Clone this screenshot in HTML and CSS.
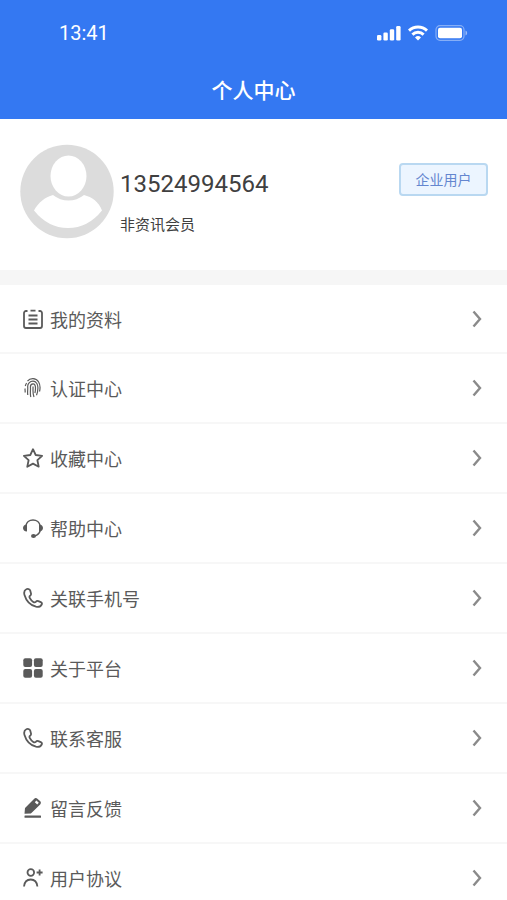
FILE: index.html
```html
<!DOCTYPE html>
<html lang="zh-CN">
  <head>
    <meta charset="UTF-8" />
    <meta name="viewport" content="width=device-width, initial-scale=1.0" />
    <title>个人中心</title>
    <link rel="stylesheet" href="styles.css">
  </head>
  <body>
    <header class="cabecera">
      <div class="estado">
        <span class="hora">13:41</span>
        <div class="indicadores">
          <svg width="24" height="16" viewBox="0 0 24 16" fill="#fff">
            <rect x="0" y="10" width="4.4" height="5.5" rx="1.3" />
            <rect x="6.4" y="7.5" width="4.4" height="8" rx="1.3" />
            <rect x="12.8" y="4.3" width="4.4" height="11.2" rx="1.3" />
            <rect x="19.2" y="1" width="4.4" height="14.5" rx="1.3" />
          </svg>
          <svg width="20" height="16" viewBox="0 0 20 16" fill="none" stroke="#fff" stroke-width="2.9">
            <path d="M1 5.6a13 13 0 0 1 18 0" />
            <path d="M4.400 9.600a8 8 0 0 1 11.200 0" />
            <path d="M10 15.500l-3-3.100a4.300 4.300 0 0 1 6 0z" fill="#fff" stroke="none" />
          </svg>
          <svg width="33" height="16" viewBox="0 0 33 16">
            <rect x="1" y="0.700" width="28" height="14.600" rx="4" fill="none" stroke="#fff" stroke-opacity="0.400" stroke-width="1.200" />
            <rect x="3" y="2.800" width="24" height="10.400" rx="2" fill="#fff" />
            <path d="M30.500 5.500c2.200 1 2.200 4 0 5z" fill="#fff" fill-opacity="0.500" />
          </svg>
        </div>
      </div>
      <h1>个人中心</h1>
    </header>
    <main>
      <section class="perfil">
        <svg class="avatar" viewBox="0 0 94 94">
          <circle cx="47" cy="47" r="46.700" fill="#dcdcdc" />
          <ellipse cx="48.500" cy="31.500" rx="18" ry="20.500" fill="#fff" />
          <path d="M33 50.500q7 5.500 15.500 5.500t15.500-5.500c8 2 15 7 18 15.500q-14 17.500-34 17.500T14 66c4-7.500 11-13.500 19-15.500z" fill="#fff" />
        </svg>
        <div class="datos">
          <p class="telefono">13524994564</p>
          <p class="nivel">非资讯会员</p>
        </div>
        <button type="button" class="tipo">企业用户</button>
      </section>
      <nav class="menu">
        <a href="#">
          <svg class="icono" viewBox="0 0 20 20">
            <path d="M4.500 2H3a2 2 0 0 0-2 2v13a2 2 0 0 0 2 2h14a2 2 0 0 0 2-2V4a2 2 0 0 0-2-2h-1.500M7.500 1.600h5M5.500 6.500h9M5.500 10.500h9M5.500 14.500h9" />
          </svg>
          <span>我的资料</span>
          <svg class="flecha" viewBox="0 0 10 18"><path d="M1.500 1.500L8 9l-6.500 7.500" /></svg>
        </a>
        <a href="#">
          <svg class="icono huella" viewBox="0 0 20 20">
            <path d="M4.500 3.200C7-.3 13-.3 15.500 3.700c1.700 2.800 1.900 6.300 1 9.800M2.300 8c.3-1.200.7-2.200 1.300-3M1.900 10.500c.4 1.500 0 2.500.4 4M4.800 17c-.6-3 .2-5.500-.1-8-.3-3.300 2.300-5.800 5.300-5.800 3.200 0 5 3.100 4.900 6.800 0 2.500-.5 5-1.400 7.200M7.800 19c-1-3.500 0-7-.4-10 0-2 1.200-3.100 2.600-3.100 1.700 0 2.500 1.600 2.500 4.100 0 2-.2 3.500-.6 5M10 8.500c.2 3.500-.6 6.500 1 10.500" />
          </svg>
          <span>认证中心</span>
          <svg class="flecha" viewBox="0 0 10 18"><path d="M1.500 1.500L8 9l-6.500 7.500" /></svg>
        </a>
        <a href="#">
          <svg class="icono" viewBox="0 0 20 20">
            <path d="M10 1.200l2.700 5.800 6.400.8-4.700 4.400 1.300 6.500L10 15.600l-5.700 3.100 1.300-6.500L.9 7.800l6.400-.8z" />
          </svg>
          <span>收藏中心</span>
          <svg class="flecha" viewBox="0 0 10 18"><path d="M1.500 1.500L8 9l-6.500 7.500" /></svg>
        </a>
        <a href="#">
          <svg class="icono" viewBox="0 0 20 20">
            <path d="M2.800 8a7.300 7.300 0 0 1 14.400 0M17.200 12.500c-.8 3-3 5-6 5.500" stroke-width="1.500" />
            <path d="M4 6.500v7C1.400 13.300 0 11.900 0 10s1.400-3.300 4-3.500zM16 6.500v7c2.600-.2 4-1.600 4-3.500s-1.400-3.300-4-3.500z" fill="currentColor" stroke="none" />
            <ellipse cx="10.500" cy="18" rx="2.500" ry="1.900" fill="currentColor" stroke="none" />
          </svg>
          <span>帮助中心</span>
          <svg class="flecha" viewBox="0 0 10 18"><path d="M1.500 1.500L8 9l-6.500 7.500" /></svg>
        </a>
        <a href="#">
          <svg class="icono" viewBox="0 0 20 20">
            <path d="M3.300 1.300C1.300 2.300.8 4.500 1.500 7c1.700 5.800 6 10.300 11.500 11.700 2.400.5 4.700-.2 5.700-2.200.5-1 .1-1.900-.9-2.400l-2.500-1c-1-.4-1.700-.2-2.300.5-.9 1-1.700 1-2.700.3-1.600-1.100-2.800-2.500-3.600-4.100-.5-1-.3-1.700.6-2.300.8-.6.9-1.200.7-2.100l-.8-3c-.4-1.300-2.600-1.800-3.900-1.100z" />
          </svg>
          <span>关联手机号</span>
          <svg class="flecha" viewBox="0 0 10 18"><path d="M1.500 1.500L8 9l-6.500 7.500" /></svg>
        </a>
        <a href="#">
          <svg class="icono relleno" viewBox="0 0 20 20">
            <rect x="0.300" y="0.300" width="8.800" height="8.800" rx="2" />
            <rect x="10.900" y="0.300" width="8.800" height="8.800" rx="2" />
            <rect x="0.300" y="10.900" width="8.800" height="8.800" rx="2" />
            <rect x="10.900" y="10.900" width="8.800" height="8.800" rx="2" />
          </svg>
          <span>关于平台</span>
          <svg class="flecha" viewBox="0 0 10 18"><path d="M1.500 1.500L8 9l-6.500 7.500" /></svg>
        </a>
        <a href="#">
          <svg class="icono" viewBox="0 0 20 20">
            <path d="M3.300 1.300C1.300 2.300.8 4.500 1.500 7c1.700 5.800 6 10.300 11.500 11.700 2.400.5 4.700-.2 5.700-2.200.5-1 .1-1.900-.9-2.400l-2.500-1c-1-.4-1.700-.2-2.300.5-.9 1-1.700 1-2.700.3-1.600-1.100-2.800-2.500-3.600-4.100-.5-1-.3-1.700.6-2.300.8-.6.9-1.200.7-2.100l-.8-3c-.4-1.300-2.600-1.800-3.900-1.100z" />
          </svg>
          <span>联系客服</span>
          <svg class="flecha" viewBox="0 0 10 18"><path d="M1.500 1.500L8 9l-6.500 7.500" /></svg>
        </a>
        <a href="#">
          <svg class="icono relleno" viewBox="0 0 20 20">
            <path fill-rule="evenodd" d="M1.500 15.800l.5-5.800L11 1q1.700-1.700 3.400-.2l2.600 2.300q1.700 1.600.2 3.400l-9.300 9zM11.800 4.300l2.400 2.200 1.600-1.700-2.400-2.200z" />
            <rect x="1.500" y="17.500" width="16.500" height="2.200" rx="0.500" />
          </svg>
          <span>留言反馈</span>
          <svg class="flecha" viewBox="0 0 10 18"><path d="M1.500 1.500L8 9l-6.500 7.500" /></svg>
        </a>
        <a href="#">
          <svg class="icono" viewBox="0 0 20 20">
            <circle cx="7.800" cy="4.500" r="3.300" />
            <path d="M1 18.500c.5-4.700 3-7 6.700-7s6.200 2.300 6.700 7M13.600 4.500h6M16.600 1.500v6" />
          </svg>
          <span>用户协议</span>
          <svg class="flecha" viewBox="0 0 10 18"><path d="M1.500 1.500L8 9l-6.500 7.500" /></svg>
        </a>
      </nav>
    </main>
  </body>
</html>
```
FILE: styles.css
```css
* {
  box-sizing: border-box;
}
body {
  margin: 0;
  background: #fff;
  color: #404040;
  font-family: Roboto, "Noto Sans CJK SC", sans-serif;
}
/* Cabecera azul: barra de estado y título */
.cabecera {
  background: #3478f2;
  color: #fff;
  padding-bottom: 12px;
}
.estado {
  display: flex;
  justify-content: space-between;
  align-items: center;
  height: 66px;
  padding: 0 39px 0 59px;
}
.hora {
  font-size: 20px;
  line-height: 24px;
}
.indicadores {
  display: flex;
  gap: 7px;
}
h1 {
  margin: 0;
  padding-top: 9px;
  font-size: 21px;
  font-weight: 500;
  line-height: 32px;
  text-align: center;
}
/* Datos del usuario; el borde inferior es la franja gris */
.perfil {
  display: flex;
  align-items: flex-start;
  gap: 6px;
  padding: 25px 19px 31px 20px;
  border-bottom: 15px solid #f6f6f6;
}
.avatar {
  width: 94px;
  height: 95px;
}
.datos {
  flex: 1;
  padding-top: 24px;
}
.datos p {
  margin: 0;
}
.telefono {
  font-size: 24px;
  line-height: 32px;
}
.nivel {
  padding-top: 13px;
  font-size: 15px;
  line-height: 24px;
}
.tipo {
  width: 89px;
  height: 33px;
  margin-top: 19px;
  padding: 0 0 2px;
  border: 2px solid #b9d8f1;
  border-radius: 4px;
  background: #ecf5ff;
  color: #6486cf;
  font-family: inherit;
  font-size: 14px;
}
/* Lista de opciones */
.menu a {
  display: flex;
  align-items: center;
  gap: 7px;
  height: 70px;
  padding: 0 25px 0 23px;
  border-bottom: 2px solid #f7f7f7;
  color: #5a5a5a;
  font-size: 18px;
  text-decoration: none;
}
.menu a:first-child {
  height: 69px;
}
.menu span {
  flex: 1;
}
.icono {
  width: 20px;
  height: 20px;
  fill: none;
  stroke: currentColor;
  stroke-width: 1.8;
  stroke-linejoin: round;
}
.relleno {
  fill: currentColor;
  stroke: none;
}
.huella {
  stroke-width: 1.2;
}
.flecha {
  width: 10px;
  height: 18px;
  fill: none;
  stroke: #8a8a8a;
  stroke-width: 2.4;
}
```
